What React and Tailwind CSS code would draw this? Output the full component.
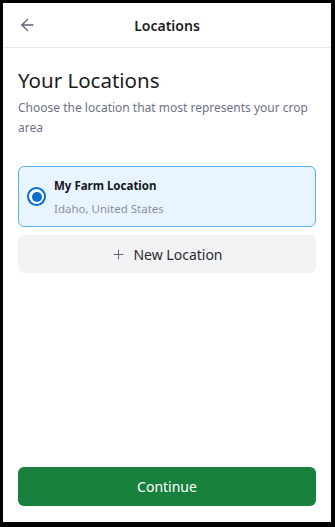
import { ArrowLeft, Plus } from 'lucide-react';

export default function App() {
  return (
    <div
      className="w-[335px] h-[527px] bg-black pt-[3px] pl-[3px] pr-[4px] pb-[5px]"
      style={{ fontFamily: '"Noto Sans", "Open Sans", sans-serif' }}
    >
      <div className="flex h-full flex-col bg-white">
        <header className="relative flex h-[45px] shrink-0 items-center justify-center border-b border-[#e6e8ee]">
          <button type="button" className="absolute left-[15px] top-1/2 -translate-y-1/2 text-[#5f6477]">
            <ArrowLeft size={19} strokeWidth={1.7} />
          </button>
          <h1 className="pt-[1px] text-[14px] font-semibold text-[#1f2024]">Locations</h1>
        </header>

        <main className="flex flex-1 flex-col px-[15px]">
          <h2 className="mt-[18px] text-[20.5px] leading-[28px] text-[#1c1d21]">Your Locations</h2>
          <p className="mt-[4px] text-[12px] leading-[20px] text-[#6e7287]">
            Choose the location that most represents your crop area
          </p>

          <div className="mt-[28px] flex h-[61px] items-center gap-[8px] rounded-[6px] border border-[#5cb2f0] bg-[#e8f4fe] pl-[8px]">
            <span className="flex h-[19px] w-[19px] items-center justify-center rounded-full border-[2px] border-[#0a6ed1] bg-white">
              <span className="h-[10px] w-[10px] rounded-full bg-[#0a6ed1]" />
            </span>
            <div className="flex flex-col pt-[2px]">
              <span className="text-[11.5px] font-bold leading-[18px] text-[#16171a]">My Farm Location</span>
              <span className="mt-[5px] text-[11.5px] leading-[18px] text-[#8d90a3]">Idaho, United States</span>
            </div>
          </div>

          <button
            type="button"
            className="mt-[8px] flex h-[38px] items-center justify-center gap-[7px] rounded-[6px] bg-[#f2f3f5] text-[14px] text-[#2a2b30]"
          >
            <Plus size={15} strokeWidth={1.6} className="text-[#5f6477]" />
            New Location
          </button>

          <div className="flex-1" />

          <button
            type="button"
            className="mb-[16px] h-[39px] rounded-[6px] bg-[#17803d] text-[14px] text-white"
          >
            Continue
          </button>
        </main>
      </div>
    </div>
  );
}
